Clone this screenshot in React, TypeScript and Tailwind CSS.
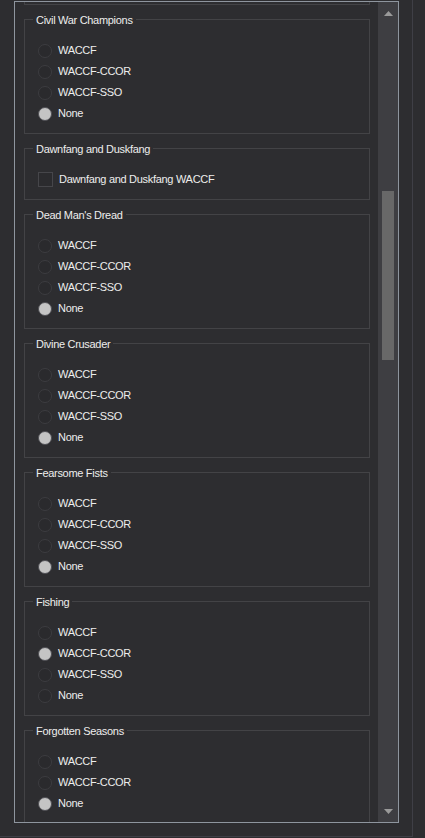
type Group = {
  title: string;
  kind: 'radio' | 'check';
  options: string[];
  selected: number;
};

const groups: Group[] = [
  { title: 'Champions of the Arena', kind: 'radio', options: ['WACCF', 'WACCF-CCOR', 'WACCF-SSO', 'None'], selected: 3 },
  { title: 'Civil War Champions', kind: 'radio', options: ['WACCF', 'WACCF-CCOR', 'WACCF-SSO', 'None'], selected: 3 },
  { title: 'Dawnfang and Duskfang', kind: 'check', options: ['Dawnfang and Duskfang WACCF'], selected: -1 },
  { title: "Dead Man's Dread", kind: 'radio', options: ['WACCF', 'WACCF-CCOR', 'WACCF-SSO', 'None'], selected: 3 },
  { title: 'Divine Crusader', kind: 'radio', options: ['WACCF', 'WACCF-CCOR', 'WACCF-SSO', 'None'], selected: 3 },
  { title: 'Fearsome Fists', kind: 'radio', options: ['WACCF', 'WACCF-CCOR', 'WACCF-SSO', 'None'], selected: 3 },
  { title: 'Fishing', kind: 'radio', options: ['WACCF', 'WACCF-CCOR', 'WACCF-SSO', 'None'], selected: 1 },
  { title: 'Forgotten Seasons', kind: 'radio', options: ['WACCF', 'WACCF-CCOR', 'None'], selected: 2 },
];

function Radio({ checked }: { checked: boolean }) {
  return checked ? (
    <span className="w-[14px] h-[14px] rounded-full border border-[#4e4e53] bg-[#c4c4c4] shrink-0" />
  ) : (
    <span className="w-[14px] h-[14px] rounded-full border border-[#3c3c40] bg-[#2a2a2d] shrink-0" />
  );
}

function Check() {
  return <span className="w-[15px] h-[15px] border border-[#46464a] bg-[#2b2b2e] shrink-0" />;
}

function GroupBox({ group }: { group: Group }) {
  return (
    <fieldset className="border border-[#434346] pl-[13px] pr-2 pt-[13px] pb-[9px] min-w-0">
      <legend className="-ml-[5px] px-[3px] leading-[15px] translate-y-[1px]">{group.title}</legend>
      {group.options.map((opt, i) => (
        <div key={opt} className="flex items-center h-[21px] gap-[6px]">
          {group.kind === 'radio' ? <Radio checked={i === group.selected} /> : <Check />}
          <span className="leading-[15px]">{opt}</span>
        </div>
      ))}
    </fieldset>
  );
}

function ScrollBar() {
  return (
    <div className="w-[20px] bg-[#3e3e42] flex flex-col shrink-0">
      <div className="h-[22px] flex items-center justify-center">
        <svg width="9" height="5" viewBox="0 0 9 5">
          <polygon points="4.5,0 9,5 0,5" fill="#9a9a9a" />
        </svg>
      </div>
      <div className="flex-1 flex flex-col items-center">
        <div className="mt-[167px] w-[12px] h-[169px] bg-[#686868]" />
      </div>
      <div className="h-[22px] flex items-center justify-center">
        <svg width="9" height="5" viewBox="0 0 9 5">
          <polygon points="0,0 9,0 4.5,5" fill="#9a9a9a" />
        </svg>
      </div>
    </div>
  );
}

export default function App() {
  return (
    <div
      className="w-[425px] h-[838px] bg-[#2d2d30] text-[#ededed] text-[11px] tracking-[-0.3px] overflow-hidden"
      style={{ fontFamily: '"Liberation Sans", Arial, sans-serif' }}
    >
      <div className="w-[413px] h-[837px] border-r border-b border-[#3f3f46] pt-[1px] pl-[14px]">
        <div className="w-[385px] h-[822px] border border-[#8e959e] flex">
          <div className="flex-1 overflow-hidden pl-[9px] pr-[8px]">
            <div className="flex flex-col gap-[7px] -mt-[119px]">
              {groups.map((g) => (
                <GroupBox key={g.title} group={g} />
              ))}
            </div>
          </div>
          <ScrollBar />
        </div>
      </div>
    </div>
  );
}
